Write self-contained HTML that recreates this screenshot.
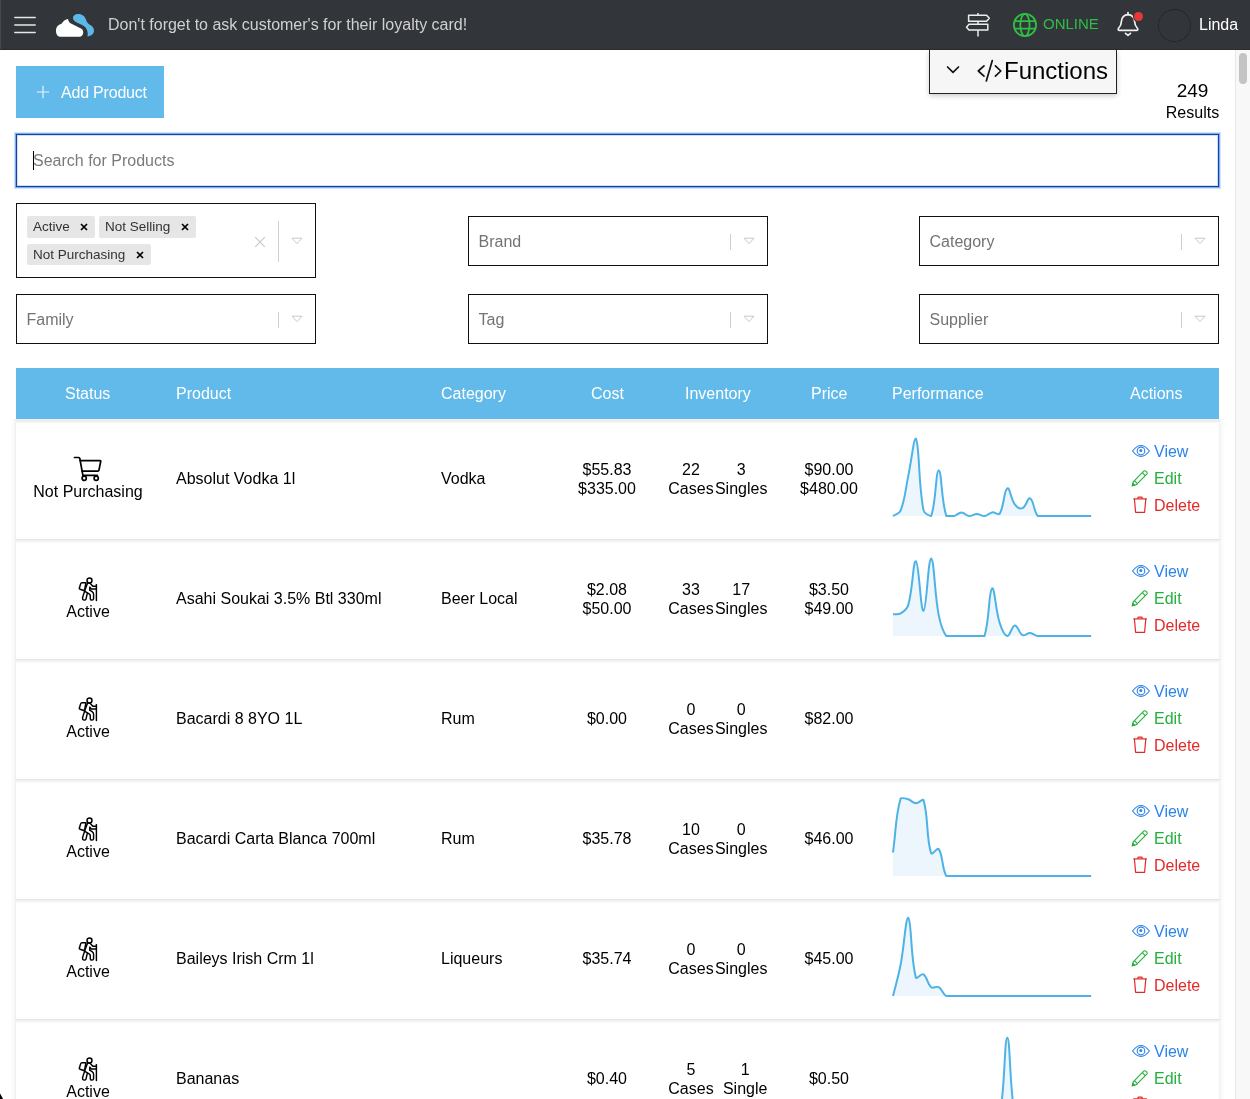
<!DOCTYPE html>
<html><head><meta charset="utf-8"><style>
*{box-sizing:border-box;margin:0;padding:0}
html,body{width:1250px;height:1099px;overflow:hidden;background:#fff;font-family:"Liberation Sans",sans-serif;color:#000}
.ic{position:absolute;overflow:visible}
body>*{will-change:transform}
#hdr{position:absolute;left:0;top:0;width:1250px;height:50px;background:#323539}
#hdr .msg{position:absolute;left:108px;top:15px;font-size:16px;line-height:19px;color:#d0d0d0;white-space:nowrap}
#hdr .online{position:absolute;left:1043px;top:14px;font-size:15px;line-height:19px;color:#2fbf45}
#hdr .user{position:absolute;left:1199px;top:15px;font-size:16px;line-height:19px;color:#fff}
#hdr .dot{position:absolute;left:1134px;top:12px;width:9.4px;height:9.4px;border-radius:50%;background:#e53935;box-shadow:0 0 0 1px #323539}
#hdr .av{position:absolute;left:1157.5px;top:9px;width:33px;height:33px;border-radius:50%;border:1px dotted #1a1a1a}
#sb{position:absolute;left:1235px;top:50px;width:15px;height:1049px;background:#f8f8f8;border-left:1px solid #e8e8e8}
#sb .th{position:absolute;left:3px;top:3px;width:8px;height:31px;border-radius:4px;background:#c4c4c4}
#add{position:absolute;left:16px;top:66px;width:148px;height:52px;background:#61baea}
#add .tx{position:absolute;left:45px;top:17px;letter-spacing:-0.2px;font-size:16px;line-height:19px;color:#fff;white-space:nowrap}
#func{position:absolute;left:929px;top:50px;width:188px;height:44px;background:#f6f6f6;border:1px solid #222;border-top:none;box-shadow:0 2px 5px rgba(0,0,0,.2)}
#func .tx{position:absolute;left:74px;top:7px;font-size:24px;line-height:28px;color:#000;white-space:nowrap}
#res{position:absolute;left:1150px;top:79.5px;width:85px;text-align:center;color:#000}
#res .n{font-size:19px;line-height:22px}
#res .r{font-size:16px;line-height:20px;margin-top:0.5px}
#search{position:absolute;left:16px;top:134px;width:1203px;height:53px;border:1px solid #1d3d99;box-shadow:0 0 0 1px #78adf7,0 0 0 2px rgba(150,195,250,.45),inset 0 0 0 1px #c8e0fc}
#search .ph{position:absolute;left:16px;top:16px;font-size:16px;line-height:19px;color:#7a7a7a;white-space:nowrap}
#search .cur{position:absolute;left:16px;top:16px;width:1.3px;height:19px;background:#000}
.sel{position:absolute;border:1px solid #111;background:#fff}
.sel .ph{position:absolute;left:9.5px;font-size:16px;line-height:19px;color:#737373;white-space:nowrap}
.sel .sep{position:absolute;width:1px;background:#cfcfcf}
.sel .arr{position:absolute}
.tag{position:absolute;height:21.5px;background:#e6e6e6;border-radius:2px;font-size:13.5px;color:#333;line-height:21px;padding-left:6px;white-space:nowrap}
#thead{position:absolute;left:16px;top:368px;width:1203px;height:51px;background:#61baea;color:#fff;font-size:16px;line-height:19px}
#thead span{position:absolute;top:16px;white-space:nowrap}
.row{position:absolute;left:16px;width:1203px;height:120px;background:#fff}
.sepl{position:absolute;left:15px;width:1205px;height:4px;z-index:2;background:linear-gradient(#e6e6e6 0,#e6e6e6 1px,#eeeeee 1px,#f2f2f2 2px,#f8f8f8 3px,#fdfdfd 4px)}
.row .t{position:absolute;font-size:16px;white-space:nowrap;line-height:19px}
.c{text-align:center}
#tl{position:absolute;left:11px;top:419px;width:5px;height:680px;background:linear-gradient(90deg,#fefefe,#f9f9f9 60%,#eeeeee)}
#tr{position:absolute;left:1219px;top:419px;width:5px;height:680px;background:linear-gradient(90deg,#eeeeee,#f9f9f9 40%,#fefefe)}
</style></head><body>
<div id="hdr"><svg class="ic" width="24" height="20" viewBox="0 0 24 20" style="left:13px;top:15px" stroke="#e6e6e6" stroke-width="1.5" stroke-linecap="round"><path d="M1.8 2.6 H22.2 M1.8 10 H22.2 M1.8 17.5 H22.2"/></svg><svg class="ic" width="50" height="30" viewBox="50 10 50 30" style="left:50px;top:10px">
<path d="M56 31 C56 27.2 58 24.6 61.5 23.8 C63 21 65.5 19.2 68 19 C68.4 21 69.2 22.6 71 23.5 L81 28.4 C82.8 29.4 83.4 31 83.2 33 C83 35.4 81.4 36.7 79.4 36.7 L60 36.7 C57.6 36.7 56 34 56 31 Z" fill="#fff"/>
<path d="M73 18 C73 15.5 75.5 14 78.5 14 C82 14 85.5 16.5 86.5 21 C87 22.2 88 23.6 89.5 24.4 C92.5 25.8 94 28 94 30.6 C94 33.6 91.5 36.3 87.4 36.5 C88.2 34 87.6 30.2 85.6 27.6 C83.6 25.2 80 24 76.2 22.2 C74 21.2 73 19.6 73 18 Z" fill="#5cb8e6"/></svg><div class="msg">Don't forget to ask customer's for their loyalty card!</div><svg class="ic" width="30" height="30" viewBox="962 10 30 30" style="left:962px;top:10px" fill="none" stroke="#ededed" stroke-width="1.5" stroke-linejoin="round">
<path d="M968.6 15.3 H986.6 L989.3 18.3 L986.6 21.2 H968.6 Z"/><path d="M987.8 24.3 H969 L966.5 27.2 L969 30.1 H987.8 Z"/><path d="M978 13 V15.3 M978 21.2 V24.3 M978 30.1 V36.6"/></svg><svg class="ic" width="30" height="30" viewBox="1010 10 30 30" style="left:1010px;top:10px" fill="none" stroke="#2fbf45" stroke-width="1.8">
<circle cx="1025" cy="25" r="11.1"/><ellipse cx="1024.9" cy="25" rx="4.6" ry="11.1"/><path d="M1014.5 21.2 H1035.5 M1014.5 28.6 H1035.5"/></svg><div class="online">ONLINE</div><svg class="ic" width="30" height="30" viewBox="1112 8 30 30" style="left:1112px;top:8px" fill="none" stroke="#f0f0f0" stroke-width="1.7" stroke-linejoin="round" stroke-linecap="round">
<path d="M1119.5 30.4 H1136.5 C1137.8 30.4 1138.3 29.2 1137.4 28.2 C1135.6 26.2 1134.6 24.6 1134.6 21.5 C1134.6 17.5 1131.8 14.7 1128 14.7 C1124.2 14.7 1121.4 17.5 1121.4 21.5 C1121.4 24.6 1120.4 26.2 1118.6 28.2 C1117.7 29.2 1118.2 30.4 1119.5 30.4 Z"/>
<path d="M1128 12.6 V14.6"/><path d="M1125.5 33.4 L1128 35.4 L1130.5 33.4"/></svg><div class="dot"></div><div class="av"></div><div class="user">Linda</div></div>
<div style="position:absolute;left:0;top:0;width:1px;height:50px;background:#47494b"></div><div style="position:absolute;left:0;top:49px;width:1250px;height:1px;background:#2a2c30"></div>
<svg class="ic" width="4" height="6" style="left:0;top:1093px"><path d="M0 0.5 L1.6 3.2 L3 6 L0 6 Z" fill="#000"/></svg>
<div id="sb"><div class="th"></div></div>
<div id="add"><svg class="ic" width="14" height="14" viewBox="0 0 14 14" style="left:20px;top:19px"><path d="M7 0.8 V13.2 M0.8 7 H13.2" stroke="#e6f3fb" stroke-width="1.2"/></svg><div class="tx">Add Product</div></div>
<div id="func"><svg class="ic" width="60" height="30" viewBox="940 55 60 30" style="left:10px;top:5px" fill="none" stroke="#111" stroke-width="1.7" stroke-linecap="round" stroke-linejoin="round">
<path d="M947.6 67 L953 72.4 L958.5 67"/><path d="M984 65.8 L978.3 71 L984 76.2"/><path d="M992.3 60.6 L986.3 81"/><path d="M995.4 65.8 L1000.8 71 L995.4 76.2"/></svg><div class="tx">Functions</div></div>
<div id="res"><div class="n">249</div><div class="r">Results</div></div>
<div id="search"><div class="cur"></div><div class="ph">Search for Products</div></div>
<div class="sel" style="left:16px;top:203px;width:300px;height:75px"><div class="sep" style="left:261px;top:16.5px;height:41px"></div><svg class="arr" width="12" height="8" viewBox="0 0 12 8" style="left:274px;top:33.0px"><path d="M1 1.2 H11 L6 6.6 Z" fill="none" stroke="#c8c8c8" stroke-width="1"/></svg><div class="tag" style="left:10px;top:12px;width:68px">Active<svg class="ic" width="8" height="8" viewBox="0 0 8 8" style="left:53px;top:7px"><path d="M1 1 L7 7 M7 1 L1 7" stroke="#000" stroke-width="1.7"/></svg></div><div class="tag" style="left:82px;top:12px;width:97px">Not Selling<svg class="ic" width="8" height="8" viewBox="0 0 8 8" style="left:82px;top:7px"><path d="M1 1 L7 7 M7 1 L1 7" stroke="#000" stroke-width="1.7"/></svg></div><div class="tag" style="left:10px;top:39.5px;width:124px">Not Purchasing<svg class="ic" width="8" height="8" viewBox="0 0 8 8" style="left:109px;top:7px"><path d="M1 1 L7 7 M7 1 L1 7" stroke="#000" stroke-width="1.7"/></svg></div><svg class="ic" width="12" height="12" viewBox="0 0 12 12" style="left:236.5px;top:32px"><path d="M1.2 1.2 L10.8 10.8 M10.8 1.2 L1.2 10.8" stroke="#c8c8c8" stroke-width="1.2"/></svg></div>
<div class="sel" style="left:468px;top:216px;width:300px;height:50px"><div class="ph" style="top:14.5px">Brand</div><div class="sep" style="left:261px;top:16.5px;height:16px"></div><svg class="arr" width="12" height="8" viewBox="0 0 12 8" style="left:274px;top:19.5px"><path d="M1 1.2 H11 L6 6.6 Z" fill="none" stroke="#c8c8c8" stroke-width="1"/></svg></div>
<div class="sel" style="left:919px;top:216px;width:300px;height:50px"><div class="ph" style="top:14.5px">Category</div><div class="sep" style="left:261px;top:16.5px;height:16px"></div><svg class="arr" width="12" height="8" viewBox="0 0 12 8" style="left:274px;top:19.5px"><path d="M1 1.2 H11 L6 6.6 Z" fill="none" stroke="#c8c8c8" stroke-width="1"/></svg></div>
<div class="sel" style="left:16px;top:294px;width:300px;height:50px"><div class="ph" style="top:14.5px">Family</div><div class="sep" style="left:261px;top:16.5px;height:16px"></div><svg class="arr" width="12" height="8" viewBox="0 0 12 8" style="left:274px;top:19.5px"><path d="M1 1.2 H11 L6 6.6 Z" fill="none" stroke="#c8c8c8" stroke-width="1"/></svg></div>
<div class="sel" style="left:468px;top:294px;width:300px;height:50px"><div class="ph" style="top:14.5px">Tag</div><div class="sep" style="left:261px;top:16.5px;height:16px"></div><svg class="arr" width="12" height="8" viewBox="0 0 12 8" style="left:274px;top:19.5px"><path d="M1 1.2 H11 L6 6.6 Z" fill="none" stroke="#c8c8c8" stroke-width="1"/></svg></div>
<div class="sel" style="left:919px;top:294px;width:300px;height:50px"><div class="ph" style="top:14.5px">Supplier</div><div class="sep" style="left:261px;top:16.5px;height:16px"></div><svg class="arr" width="12" height="8" viewBox="0 0 12 8" style="left:274px;top:19.5px"><path d="M1 1.2 H11 L6 6.6 Z" fill="none" stroke="#c8c8c8" stroke-width="1"/></svg></div>
<div id="thead">
<span style="left:49px">Status</span><span style="left:160px">Product</span><span style="left:425px">Category</span><span style="left:575px">Cost</span><span style="left:669px">Inventory</span><span style="left:795px">Price</span><span style="left:876px">Performance</span><span style="left:1114px">Actions</span></div>
<div id="tl"></div><div id="tr"></div>
<div class="row" style="top:419px">
<svg class="ic" width="40" height="30" viewBox="0 0 40 30" style="left:58px;top:37px" fill="none" stroke="#000" stroke-width="1.7" stroke-linecap="round" stroke-linejoin="round">
<path d="M0.5 1.5 H4.7 Q5.6 1.5 5.8 2.5 L8.9 19.4 H23.3"/><path d="M6.2 4.6 H26 Q26.9 4.6 26.7 5.5 L24.9 14.3 Q24.7 15.1 23.9 15.1 H8.2"/>
<circle cx="10.2" cy="22.3" r="2.1"/><circle cx="22.2" cy="22.3" r="2.1"/></svg>
<div class="t" style="left:0;width:144px;text-align:center;top:63px">Not Purchasing</div>
<div class="t" style="left:160px;top:50px">Absolut Vodka 1l</div>
<div class="t" style="left:425px;top:50px">Vodka</div>
<div class="t c" style="left:531px;width:120px;top:41px">$55.83<br>$335.00</div>
<div class="t c" style="left:753px;width:120px;top:41px">$90.00<br>$480.00</div>
<div class="t c" style="left:635px;width:80px;top:41px">22<br>Cases</div>
<div class="t c" style="left:685.2px;width:80px;top:41px">3<br>Singles</div>
<svg class="ic" width="220" height="100" viewBox="-4 -19.1 220 100" style="left:872.7px;top:0px;overflow:visible"><path d="M0.00 78.00 C3.05 75.80 6.34 75.86 7.62 72.50 C12.44 59.86 12.32 51.83 15.24 38.00 C18.42 22.95 20.74 0.00 22.86 0.30 C26.84 9.17 25.11 44.60 30.48 72.00 C31.20 75.68 37.04 78.00 38.10 78.00 C43.14 64.94 42.67 32.50 45.72 32.50 C48.77 32.50 48.11 62.38 53.34 78.00 C54.20 78.00 58.07 78.00 60.96 78.00 C64.17 77.22 65.53 74.30 68.58 74.30 C71.63 74.30 73.04 77.65 76.20 78.00 C79.14 78.00 80.77 76.00 83.82 76.00 C86.87 76.00 88.50 78.00 91.44 78.00 C94.60 77.65 95.87 74.82 99.06 74.30 C101.97 73.82 105.30 77.68 106.68 75.50 C111.40 68.04 110.67 52.34 114.30 50.20 C116.77 48.74 117.76 61.10 121.92 66.50 C123.86 69.02 127.08 71.02 129.54 70.00 C133.18 68.50 134.78 58.95 137.16 60.20 C140.87 62.15 140.41 72.89 144.78 78.00 C146.50 78.00 149.35 78.00 152.40 78.00 C155.45 78.00 156.97 78.00 160.02 78.00 C163.07 78.00 164.59 78.00 167.64 78.00 C170.69 78.00 172.21 78.00 175.26 78.00 C178.31 78.00 179.83 78.00 182.88 78.00 C185.93 78.00 187.45 78.00 190.50 78.00 C193.55 78.00 195.07 78.00 198.12 78.00 L198.12 78 L0 78 Z" fill="#eef6fd"/><path d="M0.00 78.00 C3.05 75.80 6.34 75.86 7.62 72.50 C12.44 59.86 12.32 51.83 15.24 38.00 C18.42 22.95 20.74 0.00 22.86 0.30 C26.84 9.17 25.11 44.60 30.48 72.00 C31.20 75.68 37.04 78.00 38.10 78.00 C43.14 64.94 42.67 32.50 45.72 32.50 C48.77 32.50 48.11 62.38 53.34 78.00 C54.20 78.00 58.07 78.00 60.96 78.00 C64.17 77.22 65.53 74.30 68.58 74.30 C71.63 74.30 73.04 77.65 76.20 78.00 C79.14 78.00 80.77 76.00 83.82 76.00 C86.87 76.00 88.50 78.00 91.44 78.00 C94.60 77.65 95.87 74.82 99.06 74.30 C101.97 73.82 105.30 77.68 106.68 75.50 C111.40 68.04 110.67 52.34 114.30 50.20 C116.77 48.74 117.76 61.10 121.92 66.50 C123.86 69.02 127.08 71.02 129.54 70.00 C133.18 68.50 134.78 58.95 137.16 60.20 C140.87 62.15 140.41 72.89 144.78 78.00 C146.50 78.00 149.35 78.00 152.40 78.00 C155.45 78.00 156.97 78.00 160.02 78.00 C163.07 78.00 164.59 78.00 167.64 78.00 C170.69 78.00 172.21 78.00 175.26 78.00 C178.31 78.00 179.83 78.00 182.88 78.00 C185.93 78.00 187.45 78.00 190.50 78.00 C193.55 78.00 195.07 78.00 198.12 78.00" fill="none" stroke="#4db3e6" stroke-width="2" stroke-linejoin="round"/></svg>
<svg class="ic" width="20" height="14" viewBox="0 0 20 14" style="left:1114.5px;top:25px" fill="none" stroke="#2b84ea" stroke-width="1.1">
<path d="M1.5 7 Q5.8 1.5 10 1.5 Q14.2 1.5 18.4 7 Q14.2 12.4 10 12.4 Q5.8 12.4 1.5 7 Z"/><circle cx="10" cy="6.9" r="3.8"/><circle cx="9.8" cy="6.6" r="1.5" fill="#2b84ea" stroke="none"/></svg><svg class="ic" width="18" height="18" viewBox="0 0 18 18" style="left:1115px;top:50px" fill="none" stroke="#22b03a" stroke-width="1.1" stroke-linejoin="round">
<path d="M1.3 16.8 L2.2 12.8 L12.8 2.2 Q13.8 1.2 14.8 2.2 L15.8 3.2 Q16.8 4.2 15.8 5.2 L5.2 15.8 Z"/><path d="M11.3 3.7 L14.3 6.7"/><path d="M3.4 11.6 L6.4 14.6"/><path d="M1.3 16.8 L1.9 14.3 L3.8 16.2 Z" fill="#22b03a"/></svg><svg class="ic" width="18" height="18" viewBox="0 0 18 18" style="left:1115px;top:77px" fill="none" stroke="#e02a2a" stroke-width="1.2" stroke-linejoin="round">
<path d="M2.3 2.9 H15.9"/><path d="M7 2.9 V1.8 Q7 1.1 7.7 1.1 H10.5 Q11.2 1.1 11.2 1.8 V2.9"/><path d="M3.4 2.9 L4.6 16.3 H13.6 L14.8 2.9"/></svg>
<div class="t lk" style="left:1138px;top:23px;color:#2b84ea">View</div>
<div class="t lk" style="left:1138px;top:50px;color:#22b03a">Edit</div>
<div class="t lk" style="left:1138px;top:77px;color:#e02a2a">Delete</div>
</div>
<div class="row" style="top:539px">
<svg class="ic" width="24" height="28" viewBox="0 0 24 28" style="left:62px;top:37px" fill="none" stroke="#000" stroke-width="1.45" stroke-linecap="round" stroke-linejoin="round">
<circle cx="11.5" cy="4.4" r="2.5"/>
<path d="M3.9 6.6 L7.9 6.8 L6.4 14.7 L2.1 13.3 Q1.2 13 1.3 12.3 L2.7 7.6 Q3 6.6 3.9 6.6 Z"/>
<path d="M9.4 7.4 L6.6 15.1 L4.5 21.9 Q4.3 23.8 6.0 24.1 Q7.6 24.2 8.0 23 L9.3 17.4"/>
<path d="M6.9 15.3 L11.5 18.2 Q12.3 18.8 12.3 19.8 V22.6 Q12.4 24.1 13.8 24.1 Q15.6 24 15.6 22.5 V18.6 Q15.6 16.4 13.8 15.4 L11.7 14.2 L11.9 11.1 L13.2 12.9 H18"/>
<path d="M9.4 7.4 Q11.2 6.7 12.6 7.8 L14.8 10.2 H18"/>
<path d="M18.4 8.6 V24.6"/></svg>
<div class="t" style="left:0;width:144px;text-align:center;top:63px">Active</div>
<div class="t" style="left:160px;top:50px">Asahi Soukai 3.5% Btl 330ml</div>
<div class="t" style="left:425px;top:50px">Beer Local</div>
<div class="t c" style="left:531px;width:120px;top:41px">$2.08<br>$50.00</div>
<div class="t c" style="left:753px;width:120px;top:41px">$3.50<br>$49.00</div>
<div class="t c" style="left:635px;width:80px;top:41px">33<br>Cases</div>
<div class="t c" style="left:685.2px;width:80px;top:41px">17<br>Singles</div>
<svg class="ic" width="220" height="100" viewBox="-4 -19.1 220 100" style="left:872.7px;top:0px;overflow:visible"><path d="M0.00 56.20 C3.05 55.84 5.15 56.79 7.62 55.30 C11.25 53.11 14.01 51.21 15.24 47.00 C20.10 30.37 20.00 2.11 22.86 3.20 C26.09 4.43 27.52 53.36 30.48 52.80 C33.61 52.20 35.17 0.00 38.10 0.30 C41.26 1.17 41.34 34.65 45.72 57.00 C47.43 65.73 48.79 71.74 53.34 78.00 C54.89 78.00 57.91 78.00 60.96 78.00 C64.01 78.00 65.53 78.00 68.58 78.00 C71.63 78.00 73.15 78.00 76.20 78.00 C79.25 78.00 80.77 78.00 83.82 78.00 C86.87 78.00 90.61 78.00 91.44 78.00 C96.70 61.56 95.54 33.45 99.06 30.40 C101.63 28.17 102.42 51.51 106.68 64.80 C108.52 70.55 111.03 77.46 114.30 78.00 C117.12 78.00 118.78 67.51 121.92 67.30 C124.87 67.11 125.82 75.12 129.54 77.00 C131.92 78.00 134.17 74.80 137.16 75.00 C140.27 75.20 141.62 77.38 144.78 78.00 C147.72 78.00 149.35 78.00 152.40 78.00 C155.45 78.00 156.97 78.00 160.02 78.00 C163.07 78.00 164.59 78.00 167.64 78.00 C170.69 78.00 172.21 78.00 175.26 78.00 C178.31 78.00 179.83 78.00 182.88 78.00 C185.93 78.00 187.45 78.00 190.50 78.00 C193.55 78.00 195.07 78.00 198.12 78.00 L198.12 78 L0 78 Z" fill="#eef6fd"/><path d="M0.00 56.20 C3.05 55.84 5.15 56.79 7.62 55.30 C11.25 53.11 14.01 51.21 15.24 47.00 C20.10 30.37 20.00 2.11 22.86 3.20 C26.09 4.43 27.52 53.36 30.48 52.80 C33.61 52.20 35.17 0.00 38.10 0.30 C41.26 1.17 41.34 34.65 45.72 57.00 C47.43 65.73 48.79 71.74 53.34 78.00 C54.89 78.00 57.91 78.00 60.96 78.00 C64.01 78.00 65.53 78.00 68.58 78.00 C71.63 78.00 73.15 78.00 76.20 78.00 C79.25 78.00 80.77 78.00 83.82 78.00 C86.87 78.00 90.61 78.00 91.44 78.00 C96.70 61.56 95.54 33.45 99.06 30.40 C101.63 28.17 102.42 51.51 106.68 64.80 C108.52 70.55 111.03 77.46 114.30 78.00 C117.12 78.00 118.78 67.51 121.92 67.30 C124.87 67.11 125.82 75.12 129.54 77.00 C131.92 78.00 134.17 74.80 137.16 75.00 C140.27 75.20 141.62 77.38 144.78 78.00 C147.72 78.00 149.35 78.00 152.40 78.00 C155.45 78.00 156.97 78.00 160.02 78.00 C163.07 78.00 164.59 78.00 167.64 78.00 C170.69 78.00 172.21 78.00 175.26 78.00 C178.31 78.00 179.83 78.00 182.88 78.00 C185.93 78.00 187.45 78.00 190.50 78.00 C193.55 78.00 195.07 78.00 198.12 78.00" fill="none" stroke="#4db3e6" stroke-width="2" stroke-linejoin="round"/></svg>
<svg class="ic" width="20" height="14" viewBox="0 0 20 14" style="left:1114.5px;top:25px" fill="none" stroke="#2b84ea" stroke-width="1.1">
<path d="M1.5 7 Q5.8 1.5 10 1.5 Q14.2 1.5 18.4 7 Q14.2 12.4 10 12.4 Q5.8 12.4 1.5 7 Z"/><circle cx="10" cy="6.9" r="3.8"/><circle cx="9.8" cy="6.6" r="1.5" fill="#2b84ea" stroke="none"/></svg><svg class="ic" width="18" height="18" viewBox="0 0 18 18" style="left:1115px;top:50px" fill="none" stroke="#22b03a" stroke-width="1.1" stroke-linejoin="round">
<path d="M1.3 16.8 L2.2 12.8 L12.8 2.2 Q13.8 1.2 14.8 2.2 L15.8 3.2 Q16.8 4.2 15.8 5.2 L5.2 15.8 Z"/><path d="M11.3 3.7 L14.3 6.7"/><path d="M3.4 11.6 L6.4 14.6"/><path d="M1.3 16.8 L1.9 14.3 L3.8 16.2 Z" fill="#22b03a"/></svg><svg class="ic" width="18" height="18" viewBox="0 0 18 18" style="left:1115px;top:77px" fill="none" stroke="#e02a2a" stroke-width="1.2" stroke-linejoin="round">
<path d="M2.3 2.9 H15.9"/><path d="M7 2.9 V1.8 Q7 1.1 7.7 1.1 H10.5 Q11.2 1.1 11.2 1.8 V2.9"/><path d="M3.4 2.9 L4.6 16.3 H13.6 L14.8 2.9"/></svg>
<div class="t lk" style="left:1138px;top:23px;color:#2b84ea">View</div>
<div class="t lk" style="left:1138px;top:50px;color:#22b03a">Edit</div>
<div class="t lk" style="left:1138px;top:77px;color:#e02a2a">Delete</div>
</div>
<div class="row" style="top:659px">
<svg class="ic" width="24" height="28" viewBox="0 0 24 28" style="left:62px;top:37px" fill="none" stroke="#000" stroke-width="1.45" stroke-linecap="round" stroke-linejoin="round">
<circle cx="11.5" cy="4.4" r="2.5"/>
<path d="M3.9 6.6 L7.9 6.8 L6.4 14.7 L2.1 13.3 Q1.2 13 1.3 12.3 L2.7 7.6 Q3 6.6 3.9 6.6 Z"/>
<path d="M9.4 7.4 L6.6 15.1 L4.5 21.9 Q4.3 23.8 6.0 24.1 Q7.6 24.2 8.0 23 L9.3 17.4"/>
<path d="M6.9 15.3 L11.5 18.2 Q12.3 18.8 12.3 19.8 V22.6 Q12.4 24.1 13.8 24.1 Q15.6 24 15.6 22.5 V18.6 Q15.6 16.4 13.8 15.4 L11.7 14.2 L11.9 11.1 L13.2 12.9 H18"/>
<path d="M9.4 7.4 Q11.2 6.7 12.6 7.8 L14.8 10.2 H18"/>
<path d="M18.4 8.6 V24.6"/></svg>
<div class="t" style="left:0;width:144px;text-align:center;top:63px">Active</div>
<div class="t" style="left:160px;top:50px">Bacardi 8 8YO 1L</div>
<div class="t" style="left:425px;top:50px">Rum</div>
<div class="t c" style="left:531px;width:120px;top:50px">$0.00</div>
<div class="t c" style="left:753px;width:120px;top:50px">$82.00</div>
<div class="t c" style="left:635px;width:80px;top:41px">0<br>Cases</div>
<div class="t c" style="left:685.2px;width:80px;top:41px">0<br>Singles</div>
<svg class="ic" width="20" height="14" viewBox="0 0 20 14" style="left:1114.5px;top:25px" fill="none" stroke="#2b84ea" stroke-width="1.1">
<path d="M1.5 7 Q5.8 1.5 10 1.5 Q14.2 1.5 18.4 7 Q14.2 12.4 10 12.4 Q5.8 12.4 1.5 7 Z"/><circle cx="10" cy="6.9" r="3.8"/><circle cx="9.8" cy="6.6" r="1.5" fill="#2b84ea" stroke="none"/></svg><svg class="ic" width="18" height="18" viewBox="0 0 18 18" style="left:1115px;top:50px" fill="none" stroke="#22b03a" stroke-width="1.1" stroke-linejoin="round">
<path d="M1.3 16.8 L2.2 12.8 L12.8 2.2 Q13.8 1.2 14.8 2.2 L15.8 3.2 Q16.8 4.2 15.8 5.2 L5.2 15.8 Z"/><path d="M11.3 3.7 L14.3 6.7"/><path d="M3.4 11.6 L6.4 14.6"/><path d="M1.3 16.8 L1.9 14.3 L3.8 16.2 Z" fill="#22b03a"/></svg><svg class="ic" width="18" height="18" viewBox="0 0 18 18" style="left:1115px;top:77px" fill="none" stroke="#e02a2a" stroke-width="1.2" stroke-linejoin="round">
<path d="M2.3 2.9 H15.9"/><path d="M7 2.9 V1.8 Q7 1.1 7.7 1.1 H10.5 Q11.2 1.1 11.2 1.8 V2.9"/><path d="M3.4 2.9 L4.6 16.3 H13.6 L14.8 2.9"/></svg>
<div class="t lk" style="left:1138px;top:23px;color:#2b84ea">View</div>
<div class="t lk" style="left:1138px;top:50px;color:#22b03a">Edit</div>
<div class="t lk" style="left:1138px;top:77px;color:#e02a2a">Delete</div>
</div>
<div class="row" style="top:779px">
<svg class="ic" width="24" height="28" viewBox="0 0 24 28" style="left:62px;top:37px" fill="none" stroke="#000" stroke-width="1.45" stroke-linecap="round" stroke-linejoin="round">
<circle cx="11.5" cy="4.4" r="2.5"/>
<path d="M3.9 6.6 L7.9 6.8 L6.4 14.7 L2.1 13.3 Q1.2 13 1.3 12.3 L2.7 7.6 Q3 6.6 3.9 6.6 Z"/>
<path d="M9.4 7.4 L6.6 15.1 L4.5 21.9 Q4.3 23.8 6.0 24.1 Q7.6 24.2 8.0 23 L9.3 17.4"/>
<path d="M6.9 15.3 L11.5 18.2 Q12.3 18.8 12.3 19.8 V22.6 Q12.4 24.1 13.8 24.1 Q15.6 24 15.6 22.5 V18.6 Q15.6 16.4 13.8 15.4 L11.7 14.2 L11.9 11.1 L13.2 12.9 H18"/>
<path d="M9.4 7.4 Q11.2 6.7 12.6 7.8 L14.8 10.2 H18"/>
<path d="M18.4 8.6 V24.6"/></svg>
<div class="t" style="left:0;width:144px;text-align:center;top:63px">Active</div>
<div class="t" style="left:160px;top:50px">Bacardi Carta Blanca 700ml</div>
<div class="t" style="left:425px;top:50px">Rum</div>
<div class="t c" style="left:531px;width:120px;top:50px">$35.78</div>
<div class="t c" style="left:753px;width:120px;top:50px">$46.00</div>
<div class="t c" style="left:635px;width:80px;top:41px">10<br>Cases</div>
<div class="t c" style="left:685.2px;width:80px;top:41px">0<br>Singles</div>
<svg class="ic" width="220" height="100" viewBox="-4 -19.1 220 100" style="left:872.7px;top:0px;overflow:visible"><path d="M0.00 54.40 C3.05 32.80 2.27 19.06 7.62 0.40 C8.37 0.00 12.37 0.30 15.24 1.20 C18.46 2.22 19.75 5.04 22.86 5.20 C25.85 5.36 29.67 0.00 30.48 2.00 C35.76 19.33 32.85 38.33 38.10 55.20 C38.95 57.93 44.28 48.84 45.72 51.00 C50.37 57.96 48.55 69.51 53.34 78.00 C54.64 78.00 57.91 78.00 60.96 78.00 C64.01 78.00 65.53 78.00 68.58 78.00 C71.63 78.00 73.15 78.00 76.20 78.00 C79.25 78.00 80.77 78.00 83.82 78.00 C86.87 78.00 88.39 78.00 91.44 78.00 C94.49 78.00 96.01 78.00 99.06 78.00 C102.11 78.00 103.63 78.00 106.68 78.00 C109.73 78.00 111.25 78.00 114.30 78.00 C117.35 78.00 118.87 78.00 121.92 78.00 C124.97 78.00 126.49 78.00 129.54 78.00 C132.59 78.00 134.11 78.00 137.16 78.00 C140.21 78.00 141.73 78.00 144.78 78.00 C147.83 78.00 149.35 78.00 152.40 78.00 C155.45 78.00 156.97 78.00 160.02 78.00 C163.07 78.00 164.59 78.00 167.64 78.00 C170.69 78.00 172.21 78.00 175.26 78.00 C178.31 78.00 179.83 78.00 182.88 78.00 C185.93 78.00 187.45 78.00 190.50 78.00 C193.55 78.00 195.07 78.00 198.12 78.00 L198.12 78 L0 78 Z" fill="#eef6fd"/><path d="M0.00 54.40 C3.05 32.80 2.27 19.06 7.62 0.40 C8.37 0.00 12.37 0.30 15.24 1.20 C18.46 2.22 19.75 5.04 22.86 5.20 C25.85 5.36 29.67 0.00 30.48 2.00 C35.76 19.33 32.85 38.33 38.10 55.20 C38.95 57.93 44.28 48.84 45.72 51.00 C50.37 57.96 48.55 69.51 53.34 78.00 C54.64 78.00 57.91 78.00 60.96 78.00 C64.01 78.00 65.53 78.00 68.58 78.00 C71.63 78.00 73.15 78.00 76.20 78.00 C79.25 78.00 80.77 78.00 83.82 78.00 C86.87 78.00 88.39 78.00 91.44 78.00 C94.49 78.00 96.01 78.00 99.06 78.00 C102.11 78.00 103.63 78.00 106.68 78.00 C109.73 78.00 111.25 78.00 114.30 78.00 C117.35 78.00 118.87 78.00 121.92 78.00 C124.97 78.00 126.49 78.00 129.54 78.00 C132.59 78.00 134.11 78.00 137.16 78.00 C140.21 78.00 141.73 78.00 144.78 78.00 C147.83 78.00 149.35 78.00 152.40 78.00 C155.45 78.00 156.97 78.00 160.02 78.00 C163.07 78.00 164.59 78.00 167.64 78.00 C170.69 78.00 172.21 78.00 175.26 78.00 C178.31 78.00 179.83 78.00 182.88 78.00 C185.93 78.00 187.45 78.00 190.50 78.00 C193.55 78.00 195.07 78.00 198.12 78.00" fill="none" stroke="#4db3e6" stroke-width="2" stroke-linejoin="round"/></svg>
<svg class="ic" width="20" height="14" viewBox="0 0 20 14" style="left:1114.5px;top:25px" fill="none" stroke="#2b84ea" stroke-width="1.1">
<path d="M1.5 7 Q5.8 1.5 10 1.5 Q14.2 1.5 18.4 7 Q14.2 12.4 10 12.4 Q5.8 12.4 1.5 7 Z"/><circle cx="10" cy="6.9" r="3.8"/><circle cx="9.8" cy="6.6" r="1.5" fill="#2b84ea" stroke="none"/></svg><svg class="ic" width="18" height="18" viewBox="0 0 18 18" style="left:1115px;top:50px" fill="none" stroke="#22b03a" stroke-width="1.1" stroke-linejoin="round">
<path d="M1.3 16.8 L2.2 12.8 L12.8 2.2 Q13.8 1.2 14.8 2.2 L15.8 3.2 Q16.8 4.2 15.8 5.2 L5.2 15.8 Z"/><path d="M11.3 3.7 L14.3 6.7"/><path d="M3.4 11.6 L6.4 14.6"/><path d="M1.3 16.8 L1.9 14.3 L3.8 16.2 Z" fill="#22b03a"/></svg><svg class="ic" width="18" height="18" viewBox="0 0 18 18" style="left:1115px;top:77px" fill="none" stroke="#e02a2a" stroke-width="1.2" stroke-linejoin="round">
<path d="M2.3 2.9 H15.9"/><path d="M7 2.9 V1.8 Q7 1.1 7.7 1.1 H10.5 Q11.2 1.1 11.2 1.8 V2.9"/><path d="M3.4 2.9 L4.6 16.3 H13.6 L14.8 2.9"/></svg>
<div class="t lk" style="left:1138px;top:23px;color:#2b84ea">View</div>
<div class="t lk" style="left:1138px;top:50px;color:#22b03a">Edit</div>
<div class="t lk" style="left:1138px;top:77px;color:#e02a2a">Delete</div>
</div>
<div class="row" style="top:899px">
<svg class="ic" width="24" height="28" viewBox="0 0 24 28" style="left:62px;top:37px" fill="none" stroke="#000" stroke-width="1.45" stroke-linecap="round" stroke-linejoin="round">
<circle cx="11.5" cy="4.4" r="2.5"/>
<path d="M3.9 6.6 L7.9 6.8 L6.4 14.7 L2.1 13.3 Q1.2 13 1.3 12.3 L2.7 7.6 Q3 6.6 3.9 6.6 Z"/>
<path d="M9.4 7.4 L6.6 15.1 L4.5 21.9 Q4.3 23.8 6.0 24.1 Q7.6 24.2 8.0 23 L9.3 17.4"/>
<path d="M6.9 15.3 L11.5 18.2 Q12.3 18.8 12.3 19.8 V22.6 Q12.4 24.1 13.8 24.1 Q15.6 24 15.6 22.5 V18.6 Q15.6 16.4 13.8 15.4 L11.7 14.2 L11.9 11.1 L13.2 12.9 H18"/>
<path d="M9.4 7.4 Q11.2 6.7 12.6 7.8 L14.8 10.2 H18"/>
<path d="M18.4 8.6 V24.6"/></svg>
<div class="t" style="left:0;width:144px;text-align:center;top:63px">Active</div>
<div class="t" style="left:160px;top:50px">Baileys Irish Crm 1l</div>
<div class="t" style="left:425px;top:50px">Liqueurs</div>
<div class="t c" style="left:531px;width:120px;top:50px">$35.74</div>
<div class="t c" style="left:753px;width:120px;top:50px">$45.00</div>
<div class="t c" style="left:635px;width:80px;top:41px">0<br>Cases</div>
<div class="t c" style="left:685.2px;width:80px;top:41px">0<br>Singles</div>
<svg class="ic" width="220" height="100" viewBox="-4 -19.1 220 100" style="left:872.7px;top:0px;overflow:visible"><path d="M0.00 78.00 C3.05 65.48 5.16 59.34 7.62 46.70 C11.26 28.02 12.54 0.00 15.24 -0.30 C18.64 2.51 17.50 39.42 22.86 59.30 C23.59 62.02 28.32 54.81 30.48 56.20 C34.42 58.73 34.06 65.68 38.10 69.10 C40.16 70.84 43.32 67.70 45.72 69.10 C49.41 71.26 49.65 75.84 53.34 78.00 C55.74 78.00 57.91 78.00 60.96 78.00 C64.01 78.00 65.53 78.00 68.58 78.00 C71.63 78.00 73.15 78.00 76.20 78.00 C79.25 78.00 80.77 78.00 83.82 78.00 C86.87 78.00 88.39 78.00 91.44 78.00 C94.49 78.00 96.01 78.00 99.06 78.00 C102.11 78.00 103.63 78.00 106.68 78.00 C109.73 78.00 111.25 78.00 114.30 78.00 C117.35 78.00 118.87 78.00 121.92 78.00 C124.97 78.00 126.49 78.00 129.54 78.00 C132.59 78.00 134.11 78.00 137.16 78.00 C140.21 78.00 141.73 78.00 144.78 78.00 C147.83 78.00 149.35 78.00 152.40 78.00 C155.45 78.00 156.97 78.00 160.02 78.00 C163.07 78.00 164.59 78.00 167.64 78.00 C170.69 78.00 172.21 78.00 175.26 78.00 C178.31 78.00 179.83 78.00 182.88 78.00 C185.93 78.00 187.45 78.00 190.50 78.00 C193.55 78.00 195.07 78.00 198.12 78.00 L198.12 78 L0 78 Z" fill="#eef6fd"/><path d="M0.00 78.00 C3.05 65.48 5.16 59.34 7.62 46.70 C11.26 28.02 12.54 0.00 15.24 -0.30 C18.64 2.51 17.50 39.42 22.86 59.30 C23.59 62.02 28.32 54.81 30.48 56.20 C34.42 58.73 34.06 65.68 38.10 69.10 C40.16 70.84 43.32 67.70 45.72 69.10 C49.41 71.26 49.65 75.84 53.34 78.00 C55.74 78.00 57.91 78.00 60.96 78.00 C64.01 78.00 65.53 78.00 68.58 78.00 C71.63 78.00 73.15 78.00 76.20 78.00 C79.25 78.00 80.77 78.00 83.82 78.00 C86.87 78.00 88.39 78.00 91.44 78.00 C94.49 78.00 96.01 78.00 99.06 78.00 C102.11 78.00 103.63 78.00 106.68 78.00 C109.73 78.00 111.25 78.00 114.30 78.00 C117.35 78.00 118.87 78.00 121.92 78.00 C124.97 78.00 126.49 78.00 129.54 78.00 C132.59 78.00 134.11 78.00 137.16 78.00 C140.21 78.00 141.73 78.00 144.78 78.00 C147.83 78.00 149.35 78.00 152.40 78.00 C155.45 78.00 156.97 78.00 160.02 78.00 C163.07 78.00 164.59 78.00 167.64 78.00 C170.69 78.00 172.21 78.00 175.26 78.00 C178.31 78.00 179.83 78.00 182.88 78.00 C185.93 78.00 187.45 78.00 190.50 78.00 C193.55 78.00 195.07 78.00 198.12 78.00" fill="none" stroke="#4db3e6" stroke-width="2" stroke-linejoin="round"/></svg>
<svg class="ic" width="20" height="14" viewBox="0 0 20 14" style="left:1114.5px;top:25px" fill="none" stroke="#2b84ea" stroke-width="1.1">
<path d="M1.5 7 Q5.8 1.5 10 1.5 Q14.2 1.5 18.4 7 Q14.2 12.4 10 12.4 Q5.8 12.4 1.5 7 Z"/><circle cx="10" cy="6.9" r="3.8"/><circle cx="9.8" cy="6.6" r="1.5" fill="#2b84ea" stroke="none"/></svg><svg class="ic" width="18" height="18" viewBox="0 0 18 18" style="left:1115px;top:50px" fill="none" stroke="#22b03a" stroke-width="1.1" stroke-linejoin="round">
<path d="M1.3 16.8 L2.2 12.8 L12.8 2.2 Q13.8 1.2 14.8 2.2 L15.8 3.2 Q16.8 4.2 15.8 5.2 L5.2 15.8 Z"/><path d="M11.3 3.7 L14.3 6.7"/><path d="M3.4 11.6 L6.4 14.6"/><path d="M1.3 16.8 L1.9 14.3 L3.8 16.2 Z" fill="#22b03a"/></svg><svg class="ic" width="18" height="18" viewBox="0 0 18 18" style="left:1115px;top:77px" fill="none" stroke="#e02a2a" stroke-width="1.2" stroke-linejoin="round">
<path d="M2.3 2.9 H15.9"/><path d="M7 2.9 V1.8 Q7 1.1 7.7 1.1 H10.5 Q11.2 1.1 11.2 1.8 V2.9"/><path d="M3.4 2.9 L4.6 16.3 H13.6 L14.8 2.9"/></svg>
<div class="t lk" style="left:1138px;top:23px;color:#2b84ea">View</div>
<div class="t lk" style="left:1138px;top:50px;color:#22b03a">Edit</div>
<div class="t lk" style="left:1138px;top:77px;color:#e02a2a">Delete</div>
</div>
<div class="row" style="top:1019px">
<svg class="ic" width="24" height="28" viewBox="0 0 24 28" style="left:62px;top:37px" fill="none" stroke="#000" stroke-width="1.45" stroke-linecap="round" stroke-linejoin="round">
<circle cx="11.5" cy="4.4" r="2.5"/>
<path d="M3.9 6.6 L7.9 6.8 L6.4 14.7 L2.1 13.3 Q1.2 13 1.3 12.3 L2.7 7.6 Q3 6.6 3.9 6.6 Z"/>
<path d="M9.4 7.4 L6.6 15.1 L4.5 21.9 Q4.3 23.8 6.0 24.1 Q7.6 24.2 8.0 23 L9.3 17.4"/>
<path d="M6.9 15.3 L11.5 18.2 Q12.3 18.8 12.3 19.8 V22.6 Q12.4 24.1 13.8 24.1 Q15.6 24 15.6 22.5 V18.6 Q15.6 16.4 13.8 15.4 L11.7 14.2 L11.9 11.1 L13.2 12.9 H18"/>
<path d="M9.4 7.4 Q11.2 6.7 12.6 7.8 L14.8 10.2 H18"/>
<path d="M18.4 8.6 V24.6"/></svg>
<div class="t" style="left:0;width:144px;text-align:center;top:63px">Active</div>
<div class="t" style="left:160px;top:50px">Bananas</div>
<div class="t c" style="left:531px;width:120px;top:50px">$0.40</div>
<div class="t c" style="left:753px;width:120px;top:50px">$0.50</div>
<div class="t c" style="left:635px;width:80px;top:41px">5<br>Cases</div>
<div class="t c" style="left:689.2px;width:80px;top:41px">1<br>Single</div>
<svg class="ic" width="220" height="100" viewBox="-4 -19.1 220 100" style="left:872.7px;top:0px;overflow:visible"><path d="M0.00 78.00 C3.05 78.00 4.57 78.00 7.62 78.00 C10.67 78.00 12.19 78.00 15.24 78.00 C18.29 78.00 19.81 78.00 22.86 78.00 C25.91 78.00 27.43 78.00 30.48 78.00 C33.53 78.00 35.05 78.00 38.10 78.00 C41.15 78.00 42.67 78.00 45.72 78.00 C48.77 78.00 50.29 78.00 53.34 78.00 C56.39 78.00 57.91 78.00 60.96 78.00 C64.01 78.00 65.53 78.00 68.58 78.00 C71.63 78.00 73.15 78.00 76.20 78.00 C79.25 78.00 80.77 78.00 83.82 78.00 C86.87 78.00 88.39 78.00 91.44 78.00 C94.49 78.00 96.01 78.00 99.06 78.00 C102.11 78.00 106.14 78.00 106.68 78.00 C112.24 49.41 111.25 0.00 114.30 -0.40 C117.35 0.00 116.36 49.41 121.92 78.00 C122.46 78.00 126.49 78.00 129.54 78.00 C132.59 78.00 134.11 78.00 137.16 78.00 C140.21 78.00 141.73 78.00 144.78 78.00 C147.83 78.00 149.35 78.00 152.40 78.00 C155.45 78.00 156.97 78.00 160.02 78.00 C163.07 78.00 164.59 78.00 167.64 78.00 C170.69 78.00 172.21 78.00 175.26 78.00 C178.31 78.00 179.83 78.00 182.88 78.00 C185.93 78.00 187.45 78.00 190.50 78.00 C193.55 78.00 195.07 78.00 198.12 78.00 L198.12 78 L0 78 Z" fill="#eef6fd"/><path d="M0.00 78.00 C3.05 78.00 4.57 78.00 7.62 78.00 C10.67 78.00 12.19 78.00 15.24 78.00 C18.29 78.00 19.81 78.00 22.86 78.00 C25.91 78.00 27.43 78.00 30.48 78.00 C33.53 78.00 35.05 78.00 38.10 78.00 C41.15 78.00 42.67 78.00 45.72 78.00 C48.77 78.00 50.29 78.00 53.34 78.00 C56.39 78.00 57.91 78.00 60.96 78.00 C64.01 78.00 65.53 78.00 68.58 78.00 C71.63 78.00 73.15 78.00 76.20 78.00 C79.25 78.00 80.77 78.00 83.82 78.00 C86.87 78.00 88.39 78.00 91.44 78.00 C94.49 78.00 96.01 78.00 99.06 78.00 C102.11 78.00 106.14 78.00 106.68 78.00 C112.24 49.41 111.25 0.00 114.30 -0.40 C117.35 0.00 116.36 49.41 121.92 78.00 C122.46 78.00 126.49 78.00 129.54 78.00 C132.59 78.00 134.11 78.00 137.16 78.00 C140.21 78.00 141.73 78.00 144.78 78.00 C147.83 78.00 149.35 78.00 152.40 78.00 C155.45 78.00 156.97 78.00 160.02 78.00 C163.07 78.00 164.59 78.00 167.64 78.00 C170.69 78.00 172.21 78.00 175.26 78.00 C178.31 78.00 179.83 78.00 182.88 78.00 C185.93 78.00 187.45 78.00 190.50 78.00 C193.55 78.00 195.07 78.00 198.12 78.00" fill="none" stroke="#4db3e6" stroke-width="2" stroke-linejoin="round"/></svg>
<svg class="ic" width="20" height="14" viewBox="0 0 20 14" style="left:1114.5px;top:25px" fill="none" stroke="#2b84ea" stroke-width="1.1">
<path d="M1.5 7 Q5.8 1.5 10 1.5 Q14.2 1.5 18.4 7 Q14.2 12.4 10 12.4 Q5.8 12.4 1.5 7 Z"/><circle cx="10" cy="6.9" r="3.8"/><circle cx="9.8" cy="6.6" r="1.5" fill="#2b84ea" stroke="none"/></svg><svg class="ic" width="18" height="18" viewBox="0 0 18 18" style="left:1115px;top:50px" fill="none" stroke="#22b03a" stroke-width="1.1" stroke-linejoin="round">
<path d="M1.3 16.8 L2.2 12.8 L12.8 2.2 Q13.8 1.2 14.8 2.2 L15.8 3.2 Q16.8 4.2 15.8 5.2 L5.2 15.8 Z"/><path d="M11.3 3.7 L14.3 6.7"/><path d="M3.4 11.6 L6.4 14.6"/><path d="M1.3 16.8 L1.9 14.3 L3.8 16.2 Z" fill="#22b03a"/></svg><svg class="ic" width="18" height="18" viewBox="0 0 18 18" style="left:1115px;top:77px" fill="none" stroke="#e02a2a" stroke-width="1.2" stroke-linejoin="round">
<path d="M2.3 2.9 H15.9"/><path d="M7 2.9 V1.8 Q7 1.1 7.7 1.1 H10.5 Q11.2 1.1 11.2 1.8 V2.9"/><path d="M3.4 2.9 L4.6 16.3 H13.6 L14.8 2.9"/></svg>
<div class="t lk" style="left:1138px;top:23px;color:#2b84ea">View</div>
<div class="t lk" style="left:1138px;top:50px;color:#22b03a">Edit</div>
<div class="t lk" style="left:1138px;top:77px;color:#e02a2a">Delete</div>
</div>
<div class="sepl" style="top:539px"></div>
<div class="sepl" style="top:659px"></div>
<div class="sepl" style="top:779px"></div>
<div class="sepl" style="top:899px"></div>
<div class="sepl" style="top:1019px"></div>
<div class="sepl" style="top:1139px"></div>
<div class="sepl" style="top:419px;background:linear-gradient(#f3eeee 0,#f0f0f0 1px,#ececec 2px,#f2f2f2 3px,#fafafa 4px)"></div>
</body></html>
